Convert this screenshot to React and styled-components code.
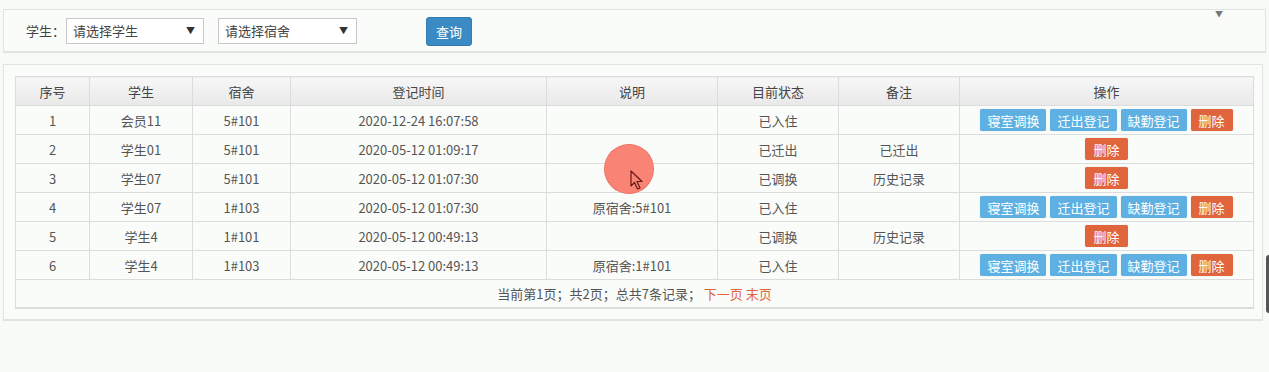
import React from 'react';
import styled, {createGlobalStyle} from 'styled-components';

const Global = createGlobalStyle`
  html, body {
    margin: 0;
    padding: 0;
    background: #f8faf8;
    font-family: "Noto Sans CJK SC", "Noto Sans", "Liberation Sans", sans-serif;
    font-size: 13px;
    color: #555;
  }
`;

const Page = styled.div`
  position: relative;
  width: 1269px;
  height: 372px;
  padding-top: 9px;
  box-sizing: border-box;
  overflow: hidden;
`;

const SearchBar = styled.div`
  position: relative;
  margin: 0 3px;
  height: 44px;
  box-sizing: border-box;
  border: 1px solid #e0e3e0;
  border-width: 1px 1px 2px 1px;
  display: flex;
  align-items: center;
  padding-left: 22px;
  background: #fafcfa;
`;

const Label = styled.span`
  color: #444;
  margin-right: 1px;
`;

const FakeSelect = styled.div`
  width: ${p => p.$w}px;
  height: 26px;
  box-sizing: border-box;
  border: 1px solid #c8c8c8;
  background: #fff;
  display: flex;
  align-items: center;
  justify-content: space-between;
  padding: 0 8px 0 6px;
  margin-right: ${p => p.$mr}px;
  color: #444;
  span.arrow {
    font-size: 9px;
    color: #333;
  }
`;

const QueryButton = styled.button`
  width: 46px;
  height: 29px;
  border: 1px solid #2f7db3;
  border-radius: 3px;
  background: #3a8bc3;
  color: #fff;
  font: inherit;
  font-size: 13px;
  padding: 0;
  margin-top: 1px;
`;

const Collapse = styled.span`
  position: absolute;
  right: 42px;
  top: 0;
  font-size: 8px;
  color: #777;
  line-height: 8px;
`;

const Panel = styled.div`
  margin: 11px 6px 0 3px;
  border: 1px solid #e0e3e0;
  border-width: 1px 1px 2px 1px;
  padding: 11px 9px 10px 11px;
  background: #fafcfa;
`;

const Table = styled.table`
  width: 100%;
  border-collapse: collapse;
  table-layout: fixed;
  border: 1px solid #dcdcdc;
  border-bottom-width: 2px;
`;

const Th = styled.th`
  height: 28px;
  padding: 0;
  border: 1px solid #dcdcdc;
  background: linear-gradient(#f7f7f7, #e9e9e9);
  color: #444;
  font-weight: normal;
  text-align: center;
`;

const Td = styled.td`
  height: 28px;
  padding: 0;
  border: 1px solid #dcdcdc;
  background: #fafcfa;
  text-align: center;
  color: #555;
  white-space: nowrap;
`;

const FooterCell = styled.td`
  height: 27px;
  padding: 0;
  text-align: center;
  color: #555;
  background: #fafcfa;
`;

const Actions = styled.div`
  display: flex;
  justify-content: center;
  gap: 4px;
`;

const ActButton = styled.button`
  height: 22px;
  padding: 0 ${p => (p.$danger ? 8 : 7)}px;
  border: none;
  border-radius: 2px;
  background: ${p => (p.$danger ? '#e0643c' : '#5eb0e2')};
  color: #fff;
  font: inherit;
  font-size: 13px;
  box-shadow: 0 0 1px rgba(0, 0, 0, 0.25);
`;

const PageLink = styled.span`
  color: #e0643c;
`;

const Highlight = styled.div`
  position: absolute;
  left: 604px;
  top: 144px;
  width: 50px;
  height: 50px;
  border-radius: 50%;
  background: #f98374;
  border: 1px dotted #e05a4a;
  box-sizing: border-box;
`;

const Cursor = styled.svg`
  position: absolute;
  left: 630px;
  top: 170px;
`;

const Scroll = styled.div`
  position: absolute;
  left: 1266px;
  top: 255px;
  width: 6px;
  height: 58px;
  border-radius: 3px;
  background: #555;
`;

const cols = [74, 103, 98, 256, 171, 121, 121, 294];
const heads = ['序号', '学生', '宿舍', '登记时间', '说明', '目前状态', '备注', '操作'];

const rows = [
  {id: 1, name: '会员11', room: '5#101', time: '2020-12-24 16:07:58', note: '', state: '已入住', mark: '', full: true},
  {id: 2, name: '学生01', room: '5#101', time: '2020-05-12 01:09:17', note: '', state: '已迁出', mark: '已迁出', full: false},
  {id: 3, name: '学生07', room: '5#101', time: '2020-05-12 01:07:30', note: '', state: '已调换', mark: '历史记录', full: false},
  {id: 4, name: '学生07', room: '1#103', time: '2020-05-12 01:07:30', note: '原宿舍:5#101', state: '已入住', mark: '', full: true},
  {id: 5, name: '学生4', room: '1#101', time: '2020-05-12 00:49:13', note: '', state: '已调换', mark: '历史记录', full: false},
  {id: 6, name: '学生4', room: '1#103', time: '2020-05-12 00:49:13', note: '原宿舍:1#101', state: '已入住', mark: '', full: true},
];

export default function App() {
  return (
    <Page>
      <Global />
      <SearchBar>
        <Label>学生：</Label>
        <FakeSelect $w={138} $mr={14}>请选择学生<span className="arrow">▼</span></FakeSelect>
        <FakeSelect $w={139} $mr={69}>请选择宿舍<span className="arrow">▼</span></FakeSelect>
        <QueryButton>查询</QueryButton>
        <Collapse>▼</Collapse>
      </SearchBar>

      <Panel>
        <Table>
          <colgroup>
            {cols.map((w, i) => <col key={i} style={{width: w}} />)}
          </colgroup>
          <thead>
            <tr>{heads.map(h => <Th key={h}>{h}</Th>)}</tr>
          </thead>
          <tbody>
            {rows.map(r => (
              <tr key={r.id}>
                <Td>{r.id}</Td>
                <Td>{r.name}</Td>
                <Td>{r.room}</Td>
                <Td>{r.time}</Td>
                <Td>{r.note}</Td>
                <Td>{r.state}</Td>
                <Td>{r.mark}</Td>
                <Td>
                  <Actions>
                    {r.full && <ActButton>寝室调换</ActButton>}
                    {r.full && <ActButton>迁出登记</ActButton>}
                    {r.full && <ActButton>缺勤登记</ActButton>}
                    <ActButton $danger>删除</ActButton>
                  </Actions>
                </Td>
              </tr>
            ))}
            <tr>
              <FooterCell colSpan={8}>
                当前第1页；共2页；总共7条记录； <PageLink>下一页 末页</PageLink>
              </FooterCell>
            </tr>
          </tbody>
        </Table>
      </Panel>

      <Highlight />
      <Cursor width="14" height="20" viewBox="0 0 14 20">
        <path d="M1 1 L1 16 L4.5 12.5 L7.5 19 L10 18 L7 11.5 L12 11.5 Z" fill="#f98374" stroke="#6a1a14" strokeWidth="1.2" strokeLinejoin="round" />
      </Cursor>
      <Scroll />
    </Page>
  );
}
